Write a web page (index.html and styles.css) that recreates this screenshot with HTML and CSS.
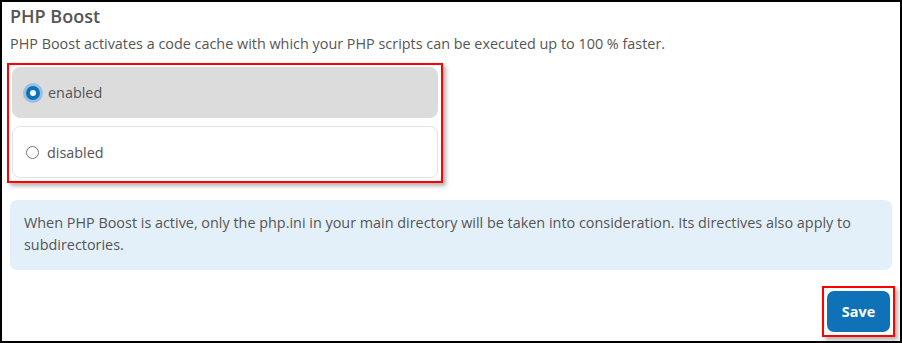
FILE: index.html
```html
<!DOCTYPE html>
<html lang="en">
<head>
    <meta charset="UTF-8">
    <meta name="viewport" content="width=device-width, initial-scale=1.0">
    <title>PHP Boost</title>
    <link rel="stylesheet" href="styles.css">
</head>
<body>

    <div class="panel">
        <h2 class="panel-title">PHP Boost</h2>
        <p class="intro">PHP Boost activates a code cache with which your PHP scripts can be executed up to 100 % faster.</p>

        <div class="choices highlight">
            <label class="choice selected">
                <input type="radio" name="boost" value="on" checked>
                <span class="dot"></span>
                enabled
            </label>
            <label class="choice">
                <input type="radio" name="boost" value="off">
                <span class="dot"></span>
                disabled
            </label>
        </div>

        <div class="info">
            When PHP Boost is active, only the php.ini in your main directory will be taken into consideration. Its directives also apply to subdirectories.
        </div>

        <div class="actions">
            <div class="highlight">
                <button class="save-button">Save</button>
            </div>
        </div>
    </div>

</body>
</html>
```

FILE: styles.css
```css
body {
    margin: 0;
    font-family: "Open Sans", Arial, sans-serif;
    color: #555;
    background-color: #fff;
}
.panel {
    height: 343px;
    box-sizing: border-box;
    border: 2px solid #000;
    padding: 0 8px;
}
.panel-title {
    margin: 0;
    padding-top: 2px;
    font-size: 18px;
    font-weight: 600;
    line-height: 24px;
}
.intro {
    margin: 6px 0 0;
    font-size: 14.4px;
    line-height: 20px;
}
.highlight {
    border: 2px solid #f00;
    box-shadow: 3px 3px 4px rgba(0, 0, 0, 0.3);
}
.choices {
    width: 426px;
    margin: 9px 0 0 -3px;
    padding: 2px 3px 3px;
    display: flex;
    flex-direction: column;
    gap: 8px;
}
.choice {
    display: flex;
    align-items: center;
    gap: 8px;
    height: 52px;
    box-sizing: border-box;
    padding-left: 13px;
    border: 1px solid #e0e4ea;
    border-radius: 8px;
    font-size: 14.4px;
    cursor: pointer;
}
.choice.selected {
    background-color: #dcdcdc;
    border-color: #dcdcdc;
    height: 51px;
}
.choice input {
    display: none;
}
.dot {
    width: 13px;
    height: 13px;
    box-sizing: border-box;
    border: 1px solid #777;
    border-radius: 50%;
    background-color: #fff;
}
.choice input:checked + .dot {
    width: 14px;
    height: 14px;
    border: 4.5px solid #0b72bd;
    box-shadow: 0 0 0 3px rgba(80, 150, 230, 0.45);
}
.info {
    margin-top: 17px;
    padding: 12px 14px 14px;
    background-color: #e4f0f9;
    border-radius: 7px;
    font-size: 14.4px;
    line-height: 22px;
}
.actions {
    display: flex;
    justify-content: flex-end;
    margin: 16px -3px 0 0;
}
.actions .highlight {
    padding: 3px;
}
.save-button {
    display: block;
    width: 63px;
    height: 41px;
    border: none;
    border-radius: 7px;
    background-color: #0f71b7;
    color: #fff;
    font-family: "Open Sans", Arial, sans-serif;
    font-size: 14.4px;
    font-weight: 700;
    cursor: pointer;
}
```
